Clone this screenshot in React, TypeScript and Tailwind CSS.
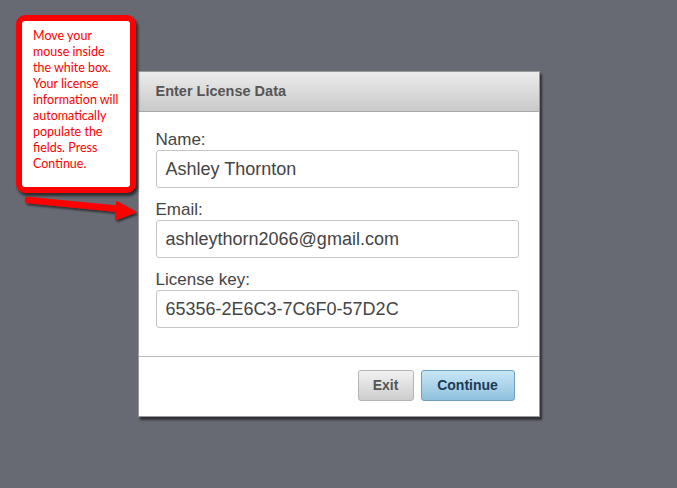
import React from "react";

function Field({ label, value }: { label: string; value: string }) {
  return (
    <div className="flex flex-col">
      <div className="h-[20px] text-[17px] leading-[20px] text-[#444]">{label}</div>
      <div className="h-[38px] rounded-[3px] border border-[#c6c6c6] bg-white px-[9px] text-[18px] leading-[36px] text-[#444]">
        {value}
      </div>
    </div>
  );
}

export default function App() {
  return (
    <div
      className="relative min-h-[488px] w-full bg-[#676a72]"
      style={{ fontFamily: "Arial, 'Liberation Sans', sans-serif" }}
    >
      <div className="flex justify-center pt-[71px]">
        <div className="w-[402px] border border-[#9a9a9a] bg-white shadow-[2px_3px_2px_rgba(0,0,0,0.55)]">
          <div className="flex h-[40px] items-center border-b border-[#a9a9a9] bg-gradient-to-b from-[#ececec] to-[#c9c9c9] px-[17px] text-[14.5px] font-bold text-[#555]">
            Enter License Data
          </div>
          <div className="flex flex-col gap-[12px] pb-[28px] pl-[17px] pr-[20px] pt-[18px]">
            <Field label="Name:" value="Ashley Thornton" />
            <Field label="Email:" value="ashleythorn2066@gmail.com" />
            <Field label="License key:" value="65356-2E6C3-7C6F0-57D2C" />
          </div>
          <div className="flex justify-end gap-[7px] border-t border-[#bcbcbc] px-[24px] pb-[15px] pt-[13px]">
            <button className="h-[31px] w-[56px] rounded-[3px] border border-[#b4b4b4] bg-gradient-to-b from-[#f2f2f2] to-[#cdcdcd] text-[14px] font-bold text-[#555]">
              Exit
            </button>
            <button className="h-[31px] w-[94px] rounded-[3px] border border-[#6e9fbf] bg-gradient-to-b from-[#c8e6f6] to-[#8fc1dd] text-[14px] font-bold text-[#1d3a55]">
              Continue
            </button>
          </div>
        </div>
      </div>

      <div className="absolute left-[16px] top-[15px] h-[178px] w-[120px] rounded-[9px] border-[6px] border-[#ff0000] bg-white shadow-[2px_3px_3px_rgba(0,0,0,0.6)]">
        <div
          className="pl-[11px] pt-[7px] text-[12.5px] leading-[16px] text-[#ff0000]"
          style={{ fontFamily: "Lato, 'Open Sans', sans-serif" }}
        >
          Move your
          <br />
          mouse inside
          <br />
          the white box.
          <br />
          Your license
          <br />
          information will
          <br />
          automatically
          <br />
          populate the
          <br />
          fields. Press
          <br />
          Continue.
        </div>
      </div>

      <svg className="absolute left-[20px] top-[192px]" width="125" height="36" viewBox="0 0 125 36">
        <defs>
          <filter id="sh" x="-10%" y="-50%" width="130%" height="200%">
            <feDropShadow dx="1.5" dy="2" stdDeviation="1.2" floodColor="#000" floodOpacity="0.6" />
          </filter>
        </defs>
        <g filter="url(#sh)">
          <path d="M8 8 L100 17" stroke="#ff0000" strokeWidth="6.5" strokeLinecap="round" fill="none" />
          <path d="M97 10 L115 20 L96 27 Z" fill="#ff0000" stroke="#ff0000" strokeWidth="2" strokeLinejoin="round" />
        </g>
      </svg>
    </div>
  );
}
